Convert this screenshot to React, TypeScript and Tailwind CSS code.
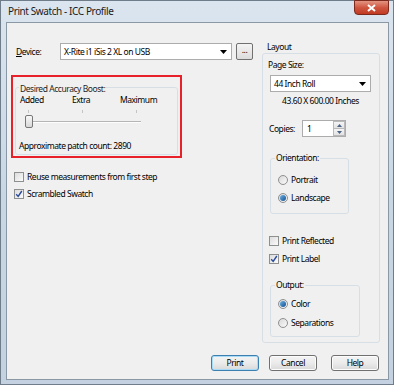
import React from "react";

const font = { fontFamily: '"Noto Sans", "Open Sans", sans-serif' };

function Checkbox({ checked, label }: { checked?: boolean; label: string }) {
  return (
    <div className="flex items-center h-[10px]">
      <div className="w-[10px] h-[10px] border border-[#8e8f8f] bg-gradient-to-br from-[#dcdcdc] to-[#fbfbfb] flex items-center justify-center">
        {checked && (
          <svg width="8" height="8" viewBox="0 0 8 8">
            <path d="M1.2 4.2 L3.2 6.4 L6.8 1" stroke="#2a4b9b" strokeWidth="1.4" fill="none" />
          </svg>
        )}
      </div>
      <span className="ml-[3px] leading-[12px] whitespace-nowrap">{label}</span>
    </div>
  );
}

function Radio({ checked, label }: { checked?: boolean; label: string }) {
  return (
    <div className="flex items-center h-[10px]">
      <div className="w-[10px] h-[10px] rounded-full border border-[#8e8f8f] bg-gradient-to-br from-[#d8d8d8] to-[#fafafa] flex items-center justify-center">
        {checked && <div className="w-[6px] h-[6px] rounded-full bg-gradient-to-br from-[#6fb4e8] to-[#0d4f8f]" />}
      </div>
      <span className="ml-[3px] leading-[12px] whitespace-nowrap">{label}</span>
    </div>
  );
}

function ComboArrow() {
  return (
    <svg width="7" height="4" viewBox="0 0 7 4">
      <path d="M0 0 H7 L3.5 4 Z" fill="#000" />
    </svg>
  );
}

function Button({ label, primary }: { label: string; primary?: boolean }) {
  return (
    <div
      className={
        "w-[48px] h-[16px] rounded-[3px] border flex items-center justify-center leading-[12px] bg-gradient-to-b from-[#f4f4f4] via-[#ebebeb] to-[#d9d9d9] " +
        (primary ? "border-[#3c7fb1] shadow-[inset_0_0_0_1px_#a8dbf6]" : "border-[#707070] shadow-[inset_0_0_0_1px_#fcfcfc]")
      }
    >
      {label}
    </div>
  );
}

export default function App() {
  return (
    <div
      className="w-[394px] h-[385px] bg-gradient-to-b from-[#dbe5ef] via-[#c9d7e5] to-[#c3d1e0] border border-[#6f7d8b] text-[8.5px] tracking-[-0.45px] text-black flex flex-col"
      style={font}
    >
      {/* title bar */}
      <div className="h-[21px] flex items-start">
        <span className="ml-[7px] mt-[4px] leading-[12px] text-[10px] tracking-[-0.4px] text-[#1a1a1a]">
          Print Swatch - ICC Profile
        </span>
        <div className="ml-auto mr-[4px] w-[35px] h-[15px] -mt-px rounded-b-[4px] border border-[#7d2a1d] bg-gradient-to-b from-[#e39483] via-[#cf5640] to-[#c13a22] flex items-center justify-center">
          <svg width="9" height="8" viewBox="0 0 9 8">
            <path d="M1 1 L8 7 M8 1 L1 7" stroke="#fff" strokeWidth="2" />
          </svg>
        </div>
      </div>

      {/* client area */}
      <div className="ml-[5px] w-[383px] h-[358px] border border-[#8a97a5] bg-[#f0f0f0] flex flex-col">
        <div className="flex">
          {/* left column */}
          <div className="w-[255px] flex flex-col">
            <div className="mt-[20px] ml-[9px] flex items-center">
              <span className="w-[44px] leading-[12px]">
                <span className="underline">D</span>evice:
              </span>
              <div className="w-[172px] h-[17px] border border-[#acacac] bg-white flex items-center pl-[3px] pr-[4px]">
                <span className="leading-[12px]">X-Rite i1 iSis 2 XL on USB</span>
                <span className="ml-auto flex">
                  <ComboArrow />
                </span>
              </div>
              <div className="ml-[4px] w-[17px] h-[17px] rounded-[2px] border border-[#707070] bg-gradient-to-b from-[#f4f4f4] to-[#dcdcdc] flex items-center justify-center leading-[10px] pb-[3px]">
                ...
              </div>
            </div>

            {/* highlighted accuracy boost */}
            <div className="mt-[15px] ml-[4px] w-[171px] h-[83px] border-2 border-[#e8202a]">
              <div className="relative mt-[10px] ml-[2px] w-[163px] h-[68px] border border-[#d7dfe6] rounded-[3px] flex flex-col">
                <span className="absolute -top-[5px] left-[3px] px-[1px] bg-[#f0f0f0] leading-[12px] text-[#1e1e1e]">
                  Desired Accuracy Boost:
                </span>
                <div className="mt-[6px] ml-[4px] flex leading-[12px]">
                  <span className="w-[52px]">Added</span>
                  <span className="w-[48px]">Extra</span>
                  <span>Maximum</span>
                </div>
                <div className="mt-[4px] ml-[12px] flex h-[3px]">
                  <div className="w-px h-[3px] bg-[#c4c4c4]" />
                  <div className="ml-[53px] w-px h-[3px] bg-[#c4c4c4]" />
                  <div className="ml-[53px] w-px h-[3px] bg-[#c4c4c4]" />
                </div>
                <div className="relative mt-[2px] ml-[9px] w-[117px] h-[13px]">
                  <div className="absolute left-[3px] top-[6px] w-[113px] h-px bg-[#b5b5b5]" />
                  <div className="absolute left-[3px] top-[7px] w-[113px] h-px bg-[#fdfdfd]" />
                  <div className="absolute left-0 top-0 w-[8px] h-[13px] rounded-[2px] border border-[#777] bg-gradient-to-b from-[#f8f8f8] to-[#d8d8d8]" />
                </div>
                <span className="mt-[12px] ml-[3px] leading-[12px]">Approximate patch count: 2890</span>
              </div>
            </div>

            <div className="mt-[14px] ml-[7px] flex flex-col gap-[7px]">
              <Checkbox label="Reuse measurements from first step" />
              <Checkbox checked label="Scrambled Swatch" />
            </div>
          </div>

          {/* right column */}
          <div className="flex flex-col">
            <span className="mt-[18px] ml-[5px] leading-[12px]">Layout</span>
            <div className="w-[118px] h-[290px] border border-[#d7dfe6] rounded-[3px] flex flex-col">
              <span className="mt-[5px] ml-[5px] leading-[12px]">Page Size:</span>
              <div className="mt-[4px] ml-[7px] w-[101px] h-[17px] border border-[#acacac] bg-white flex items-center pl-[3px] pr-[4px]">
                <span className="leading-[12px]">44 Inch Roll</span>
                <span className="ml-auto flex">
                  <ComboArrow />
                </span>
              </div>
              <span className="mt-[3px] ml-[7px] w-[101px] text-center leading-[12px] whitespace-nowrap">
                43.60 X 600.00 Inches
              </span>

              <div className="mt-[13px] ml-[6px] flex items-center">
                <span className="w-[33px] leading-[12px]">Copies:</span>
                <div className="w-[44px] h-[17px] border border-[#acacac] bg-white flex">
                  <span className="ml-[4px] mt-[2px] leading-[12px]">1</span>
                  <div className="ml-auto w-[12px] flex flex-col">
                    <div className="h-[8px] border border-[#b9b9b9] bg-gradient-to-b from-[#f5f5f5] to-[#e2e2e2] flex items-center justify-center">
                      <svg width="5" height="3" viewBox="0 0 5 3">
                        <path d="M0 3 H5 L2.5 0 Z" fill="#4d6185" />
                      </svg>
                    </div>
                    <div className="h-[7px] border border-t-0 border-[#b9b9b9] bg-gradient-to-b from-[#f5f5f5] to-[#e2e2e2] flex items-center justify-center">
                      <svg width="5" height="3" viewBox="0 0 5 3">
                        <path d="M0 0 H5 L2.5 3 Z" fill="#4d6185" />
                      </svg>
                    </div>
                  </div>
                </div>
              </div>

              <div className="relative mt-[21px] ml-[7px] w-[79px] h-[56px] border border-[#d7dfe6] rounded-[3px] flex flex-col">
                <span className="absolute -top-[7px] left-[4px] px-[1px] bg-[#f0f0f0] leading-[12px]">Orientation:</span>
                <div className="mt-[16px] ml-[7px] flex flex-col gap-[8px]">
                  <Radio label="Portrait" />
                  <Radio checked label="Landscape" />
                </div>
              </div>

              <div className="mt-[22px] ml-[6px] flex flex-col gap-[8px]">
                <Checkbox label="Print Reflected" />
                <Checkbox checked label="Print Label" />
              </div>

              <div className="relative mt-[21px] ml-[7px] w-[90px] h-[52px] border border-[#d7dfe6] rounded-[3px] flex flex-col">
                <span className="absolute -top-[7px] left-[4px] px-[1px] bg-[#f0f0f0] leading-[12px]">Output:</span>
                <div className="mt-[13px] ml-[7px] flex flex-col gap-[9px]">
                  <Radio checked label="Color" />
                  <Radio label="Separations" />
                </div>
              </div>
            </div>
          </div>
        </div>

        {/* buttons */}
        <div className="mt-[12px] ml-[204px] flex">
          <Button primary label="Print" />
          <div className="ml-[10px]">
            <Button label="Cancel" />
          </div>
          <div className="ml-[14px]">
            <Button label="Help" />
          </div>
        </div>
      </div>
    </div>
  );
}
